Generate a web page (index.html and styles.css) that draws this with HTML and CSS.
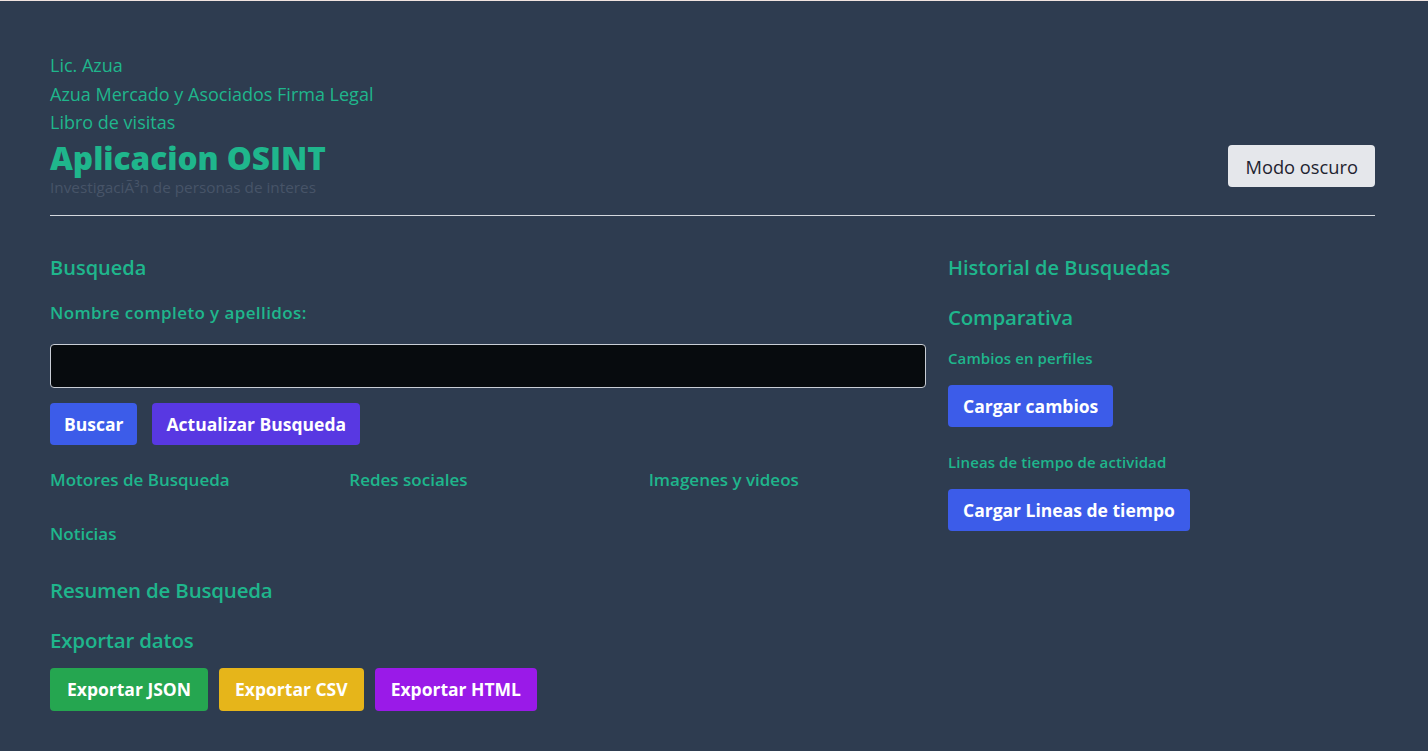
FILE: index.html
```html
<!DOCTYPE html>
<html lang="es">
<head>
<meta charset="utf-8">
<title>Aplicacion OSINT</title>
<link rel="stylesheet" href="styles.css">
</head>
<body>
<div class="page">
  <header class="header">
    <nav class="toplinks">
      <a class="toplink">Lic. Azua</a>
      <a class="toplink">Azua Mercado y Asociados Firma Legal</a>
      <a class="toplink">Libro de visitas</a>
    </nav>
    <div class="title-row">
      <div class="title-block">
        <h1 class="title">Aplicacion OSINT</h1>
        <p class="subtitle">InvestigaciÃ³n de personas de interes</p>
      </div>
      <button class="btn btn-light">Modo oscuro</button>
    </div>
  </header>
  <hr class="divider">
  <main class="main">
    <section class="left">
      <h2 class="heading h-first">Busqueda</h2>
      <label class="label">Nombre completo y apellidos:</label>
      <input class="input" type="text">
      <div class="btn-row">
        <button class="btn btn-blue">Buscar</button>
        <button class="btn btn-indigo">Actualizar Busqueda</button>
      </div>
      <div class="cats">
        <div class="cat">Motores de Busqueda</div>
        <div class="cat">Redes sociales</div>
        <div class="cat">Imagenes y videos</div>
        <div class="cat">Noticias</div>
      </div>
      <h2 class="heading h-resumen">Resumen de Busqueda</h2>
      <h2 class="heading h-export">Exportar datos</h2>
      <div class="btn-row export-row">
        <button class="btn btn-green">Exportar JSON</button>
        <button class="btn btn-yellow">Exportar CSV</button>
        <button class="btn btn-purple">Exportar HTML</button>
      </div>
    </section>
    <aside class="right">
      <h2 class="heading h-first">Historial de Busquedas</h2>
      <h2 class="heading h-comp">Comparativa</h2>
      <h3 class="subhead sh-first">Cambios en perfiles</h3>
      <button class="btn btn-blue btn-side">Cargar cambios</button>
      <h3 class="subhead sh-second">Lineas de tiempo de actividad</h3>
      <button class="btn btn-blue btn-side">Cargar Lineas de tiempo</button>
    </aside>
  </main>
</div>
</body>
</html>
```

FILE: styles.css
```css
* { box-sizing: border-box; }
html, body { margin: 0; padding: 0; }
body {
  background: #2e3c50;
  border-top: 1px solid #f1e4e0;
  font-family: "Open Sans", "Noto Sans", sans-serif;
  color: #1fb68c;
  min-height: 751px;
}
.page {
  padding: 50px 53px 0 50px;
}
.toplinks {
  display: flex;
  flex-direction: column;
  align-items: flex-start;
}
.toplink {
  font-size: 18px;
  line-height: 28.5px;
  color: #1fb68c;
  text-decoration: none;
}
.title-row {
  display: flex;
  justify-content: space-between;
  align-items: center;
}
.title {
  margin: 0;
  font-size: 31.5px;
  line-height: 41px;
  font-weight: 800;
  color: #1fb68c;
}
.subtitle {
  margin: 0;
  font-size: 15.3px;
  line-height: 18px;
  color: #475468;
}
.btn {
  border: none;
  border-radius: 4px;
  font-family: "Open Sans", "Noto Sans", sans-serif;
  font-weight: 700;
  font-size: 17.5px;
  color: #ffffff;
  height: 42px;
  padding: 0 14px;
  cursor: pointer;
}
.btn-light {
  background: #e5e7eb;
  color: #1f2430;
  font-weight: 400;
  font-size: 18.3px;
  padding: 0 17px;
}
.divider {
  border: none;
  border-top: 1px solid #d4d8de;
  margin: 19px 0 0 0;
}
.main {
  display: grid;
  grid-template-columns: 876px 1fr;
  column-gap: 22px;
  align-items: start;
}
.left, .right {
  display: flex;
  flex-direction: column;
  align-items: flex-start;
}
.heading {
  margin: 0;
  font-size: 20px;
  line-height: 24px;
  font-weight: 600;
  color: #1fb68c;
}
.h-first { margin-top: 40px; }
.label {
  margin-top: 21px;
  font-size: 17px;
  line-height: 24px;
  font-weight: 600;
  letter-spacing: 0.4px;
}
.input {
  margin-top: 19px;
  width: 100%;
  height: 44px;
  background: #070b0e;
  border: 1px solid #c9ced6;
  border-radius: 4px;
}
.btn-row {
  display: flex;
  gap: 15px;
  margin-top: 15px;
}
.btn-blue { background: #3c5ce9; }
.btn-indigo { background: #5838e2; }
.btn-green { background: #25a650; }
.btn-yellow { background: #e6b51a; }
.btn-purple { background: #9a1ae8; }
.cats {
  width: 100%;
  display: grid;
  grid-template-columns: repeat(3, 1fr);
  column-gap: 22px;
  row-gap: 30px;
  margin-top: 23px;
}
.cat {
  font-size: 17px;
  line-height: 24px;
  font-weight: 600;
}
.h-resumen {
  margin-top: 31px;
  font-size: 20.5px;
  line-height: 26px;
  letter-spacing: -0.2px;
}
.h-export {
  margin-top: 24px;
  font-size: 20.5px;
  line-height: 26px;
  letter-spacing: -0.2px;
}
.export-row {
  gap: 11px;
}
.export-row .btn { height: 43px; padding: 0 16px; }
.export-row .btn-green { padding: 0 17px; }
.h-comp { margin-top: 24px; font-size: 20.5px; line-height: 26px; letter-spacing: -0.2px; }
.subhead {
  margin: 0;
  font-size: 15px;
  line-height: 20px;
  font-weight: 600;
  letter-spacing: 0.1px;
}
.sh-first { margin-top: 18px; }
.sh-second { margin-top: 25px; }
.btn-side { margin-top: 17px; }
.right .btn-side { padding: 0 15px; }
```
